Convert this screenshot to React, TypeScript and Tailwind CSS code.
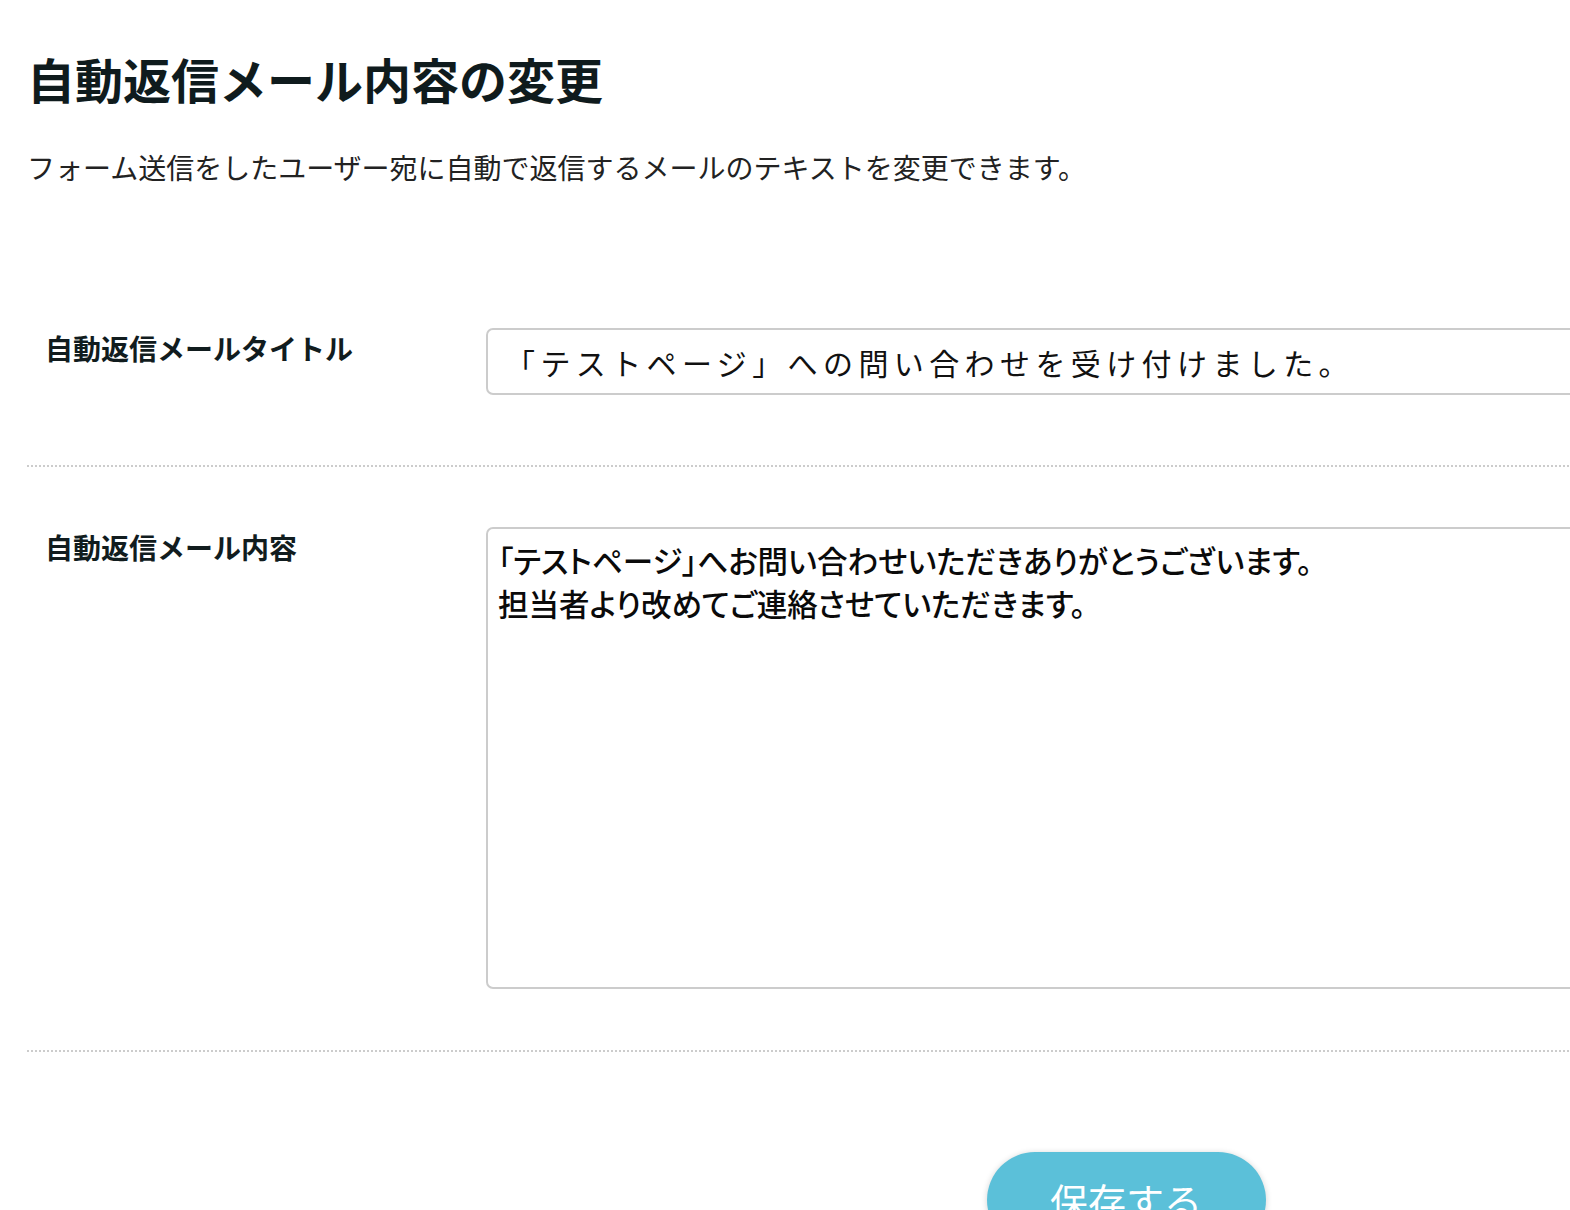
import React from 'react'

const font = "font-['Noto_Sans_CJK_JP','Noto_Sans',sans-serif]"

type FieldRowProps = {
  label: string
  className?: string
  children: React.ReactNode
}

function FieldRow({ label, className = '', children }: FieldRowProps) {
  return (
    <div className={`flex border-b-2 border-dotted border-[#cccccc] ${className}`}>
      <div className="w-[459px] shrink-0 pl-[18px]">
        <p className="text-[28px] font-bold leading-[40px] text-[#111c1e]">{label}</p>
      </div>
      <div className="flex-1">{children}</div>
    </div>
  )
}

export default function App() {
  return (
    <div className={`h-[1210px] w-[1570px] overflow-hidden bg-white ${font}`}>
      <div className="ml-[27px] w-[2198px] pt-[42px]">
        <h1 className="text-[48px] font-bold leading-[72px] text-[#0f1b1d]">
          自動返信メール内容の変更
        </h1>
        <p className="mt-[33px] text-[28px] leading-[40px] text-[#222222]">
          フォーム送信をしたユーザー宛に自動で返信するメールのテキストを変更できます。
        </p>

        <div className="mt-[79px]">
          <FieldRow label="自動返信メールタイトル" className="pt-[62px] pb-[70px]">
            <input
              type="text"
              defaultValue="「テストページ」への問い合わせを受け付けました。"
              className="h-[67px] w-full rounded-[7px] border-2 border-[#cccccc] bg-white px-[17px] text-[30px] tracking-[5.4px] text-[#111111] outline-none"
            />
          </FieldRow>

          <FieldRow label="自動返信メール内容" className="pt-[60px] pb-[61px]">
            <textarea
              defaultValue={'「テストページ」へお問い合わせいただきありがとうございます。\n担当者より改めてご連絡させていただきます。'}
              className="block h-[462px] w-full resize-none rounded-[7px] border-2 border-[#cccccc] bg-white px-[10px] py-[10px] text-[30.5px] font-medium leading-[43px] text-[#0a0a0a] outline-none [font-feature-settings:'palt']"
            />
          </FieldRow>
        </div>

        <div className="flex justify-center pt-[100px]">
          <button
            type="button"
            className="h-[96px] w-[279px] rounded-full bg-[#5bc0d9] text-[38px] leading-none text-white shadow-[0_1px_6px_rgba(0,0,0,0.18)]"
          >
            保存する
          </button>
        </div>
      </div>
    </div>
  )
}
